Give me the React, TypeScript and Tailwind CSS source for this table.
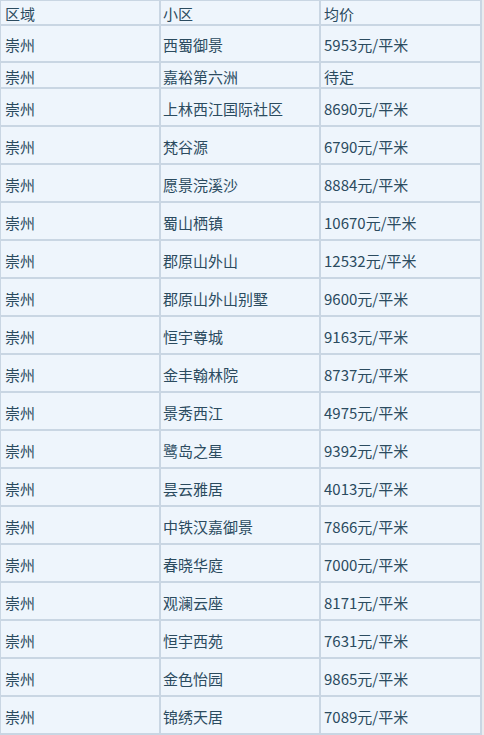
const rows: [string, string, string][] = [
  ["崇州", "西蜀御景", "5953元/平米"],
  ["崇州", "嘉裕第六洲", "待定"],
  ["崇州", "上林西江国际社区", "8690元/平米"],
  ["崇州", "梵谷源", "6790元/平米"],
  ["崇州", "愿景浣溪沙", "8884元/平米"],
  ["崇州", "蜀山栖镇", "10670元/平米"],
  ["崇州", "郡原山外山", "12532元/平米"],
  ["崇州", "郡原山外山别墅", "9600元/平米"],
  ["崇州", "恒宇尊城", "9163元/平米"],
  ["崇州", "金丰翰林院", "8737元/平米"],
  ["崇州", "景秀西江", "4975元/平米"],
  ["崇州", "鹭岛之星", "9392元/平米"],
  ["崇州", "昙云雅居", "4013元/平米"],
  ["崇州", "中铁汉嘉御景", "7866元/平米"],
  ["崇州", "春晓华庭", "7000元/平米"],
  ["崇州", "观澜云座", "8171元/平米"],
  ["崇州", "恒宇西苑", "7631元/平米"],
  ["崇州", "金色怡园", "9865元/平米"],
  ["崇州", "锦绣天居", "7089元/平米"],
]

function Row({ cells, h }: { cells: string[]; h: string }) {
  return (
    <>
      <div className={`${h} bg-[#eef5fc] pl-[4px] pt-[2px] flex items-center`}>{cells[0]}</div>
      <div className={`${h} bg-[#eef5fc] pl-[2px] pt-[2px] flex items-center`}>{cells[1]}</div>
      <div className={`${h} bg-[#eef5fc] pl-[3px] pt-[2px] flex items-center`}>{cells[2]}</div>
    </>
  )
}

export default function App() {
  return (
    <div className="w-[484px] h-[735px] bg-[#e9ecef] overflow-hidden">
      <div
        className="w-[482px] grid grid-cols-[158px_158px_159px] gap-[2px] bg-[#c9d6e3] pt-[1px] pl-[1px] pb-[2px] text-[15px] leading-none text-[#2b4b5f]"
        style={{ fontFamily: '"Noto Sans CJK SC", "Noto Sans", sans-serif' }}
      >
        <Row cells={["区域", "小区", "均价"]} h="h-[23px]" />
        {rows.map((r, i) => (
          <Row
            key={i}
            cells={r}
            h={i === 0 ? "h-[35px]" : i === 1 ? "h-[24px]" : "h-[36px]"}
          />
        ))}
      </div>
    </div>
  )
}
